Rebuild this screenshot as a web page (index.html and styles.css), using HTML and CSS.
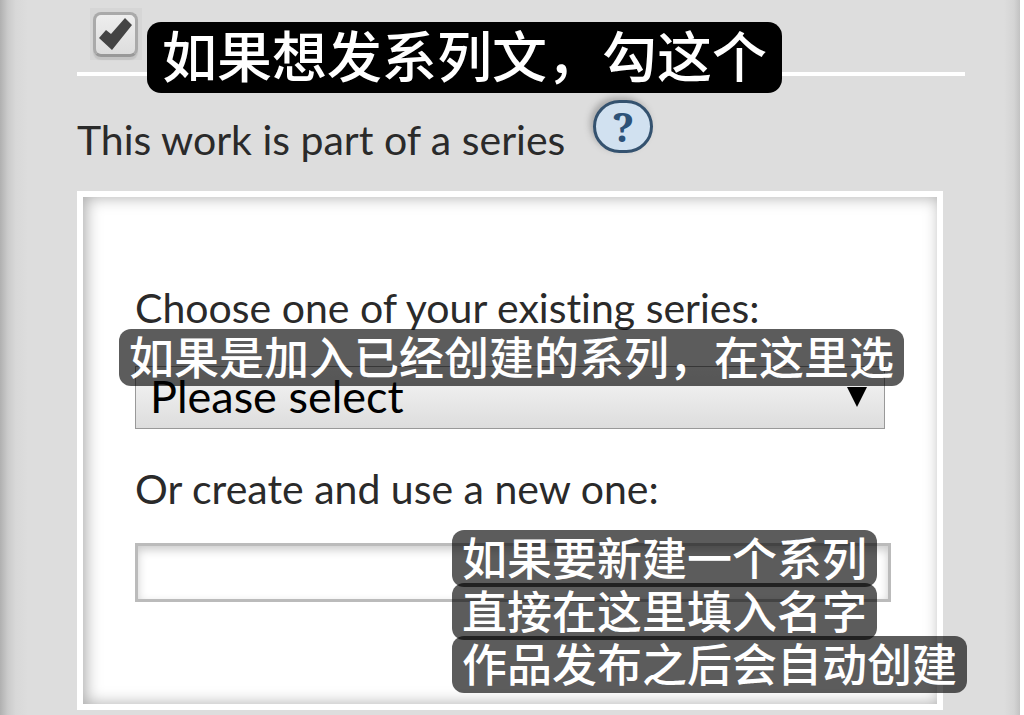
FILE: index.html
```
<!DOCTYPE html>
<html lang="en">
<head>
<meta charset="utf-8">
<meta name="viewport" content="width=device-width, initial-scale=1">
<title>Series</title>
<link rel="stylesheet" href="styles.css">
</head>
<body>
<form class="work-form">
  <div class="toggle-row">
    <span class="tick">
      <input class="tick-input" type="checkbox" id="in-series" checked>
      <svg class="tick-mark" viewBox="0 0 44 46" aria-hidden="true"><path d="M5 26 L12 18 L17 22 L31 6 L38 13 L18 38 Z"/></svg>
    </span>
    <p class="note note-title" lang="zh-CN">如果想发系列文，勾这个</p>
  </div>
  <div class="label-row">
    <label for="in-series">This work is part of a series</label>
    <button class="help" type="button" aria-label="Help">?</button>
  </div>
  <section class="series">
    <div class="field">
      <label for="existing">Choose one of your existing series:</label>
      <div class="picker">
        <select class="select" id="existing"><option>Please select</option></select>
        <svg class="arrow" viewBox="0 0 20 20" aria-hidden="true"><path d="M0 0H20L10 20Z"/></svg>
      </div>
      <p class="note note-existing" lang="zh-CN">如果是加入已经创建的系列，在这里选</p>
    </div>
    <div class="field">
      <label for="new-series">Or create and use a new one:</label>
      <input class="text" type="text" id="new-series">
      <div class="note-stack" lang="zh-CN">
        <p class="note">如果要新建一个系列</p>
        <p class="note">直接在这里填入名字</p>
        <p class="note">作品发布之后会自动创建</p>
      </div>
    </div>
  </section>
</form>
</body>
</html>
```
FILE: styles.css
```
* { box-sizing: border-box; }

body {
  margin: 0;
  background: #fff;
  color: #2a2a2a;
  font-family: Lato, "Noto Sans CJK SC", sans-serif;
  font-size: 41px;
  font-variant-ligatures: none;
  line-height: 48px;
}

.work-form {
  min-height: 100vh;
  margin-right: 4px;
  padding: 0 55px 4px 77px;
  background:
    linear-gradient(to right, #b0b0b0, #cbcbcb 8px, #d8d8d8 16px, #ddd 28px, transparent 28px),
    linear-gradient(to left, #c2c2c2, #d4d4d4 6px, #ddd 16px);
}

.toggle-row {
  position: relative;
  height: 76px;
  padding: 8px 13px;
  border-bottom: 4px solid #fff;
}

.tick {
  position: relative;
  display: block;
  width: 52px;
  height: 52px;
  padding: 4px 3px;
  background: #d6d6d6;
}

.tick-input {
  appearance: none;
  display: block;
  width: 45px;
  height: 45px;
  margin: 0;
  border: 3px solid #aaa;
  border-bottom-color: #999;
  border-radius: 8px;
  background: linear-gradient(#eee, #ddd);
  box-shadow: 0 3px 1px #c4c4c4;
}

.tick-mark {
  position: absolute;
  top: 4px;
  left: 4px;
  width: 44px;
  height: 46px;
  fill: #444;
  pointer-events: none;
}

.label-row {
  display: flex;
  align-items: flex-start;
  gap: 28px;
  height: 115px;
  padding-top: 24px;
}

.label-row label { padding-top: 16px; }

.help {
  width: 60px;
  height: 53px;
  padding: 0;
  border: 3px solid #34526f;
  border-radius: 27px;
  background: #d1e1f0;
  box-shadow: -3px -3px 6px #aaa;
  color: #2d5278;
  font: bold 40px/44px "Noto Serif", "DejaVu Serif", serif;
}

.series {
  display: flex;
  flex-direction: column;
  gap: 36px;
  margin-right: 22px;
  padding: 87px 46px 102px 52px;
  border: 6px solid #fff;
  background: #fff;
  box-shadow: inset 3px 0 16px #aaa;
}

.field { position: relative; }

.field label { display: block; }

.picker {
  position: relative;
  margin: 34px 6px 0 0;
}

.select {
  appearance: none;
  display: block;
  width: 100%;
  height: 63px;
  padding: 0 14px 4px;
  border: 1px solid #999;
  border-radius: 0;
  background: linear-gradient(#f6f6f6, #ddd);
  color: #000;
  font: inherit;
  font-size: 45px;
}

.arrow {
  position: absolute;
  top: 21px;
  right: 18px;
  width: 20px;
  height: 20px;
  pointer-events: none;
}

.text {
  display: block;
  width: 100%;
  height: 59px;
  margin-top: 30px;
  padding: 0 12px;
  border: 3px solid #bbb;
  background: #fff;
  box-shadow: inset 0 4px 10px #ccc;
  font: inherit;
}

.note {
  width: max-content;
  margin: 0;
  padding: 0 10px 4px;
  border-radius: 12px;
  background: rgb(0 0 0 / 64%);
  color: #fff;
  font: 500 45px/53px "Noto Sans CJK SC", sans-serif;
}

.note-title {
  position: absolute;
  top: 22px;
  left: 70px;
  padding: 0 15px 8px;
  border-radius: 14px;
  background: #000;
  font-size: 55px;
  line-height: 63px;
}

.note-existing {
  position: absolute;
  top: 45px;
  left: -16px;
}

.note-stack {
  position: absolute;
  top: 65px;
  left: 317px;
}

.note-stack .note + .note { margin-top: -4px; }
```
